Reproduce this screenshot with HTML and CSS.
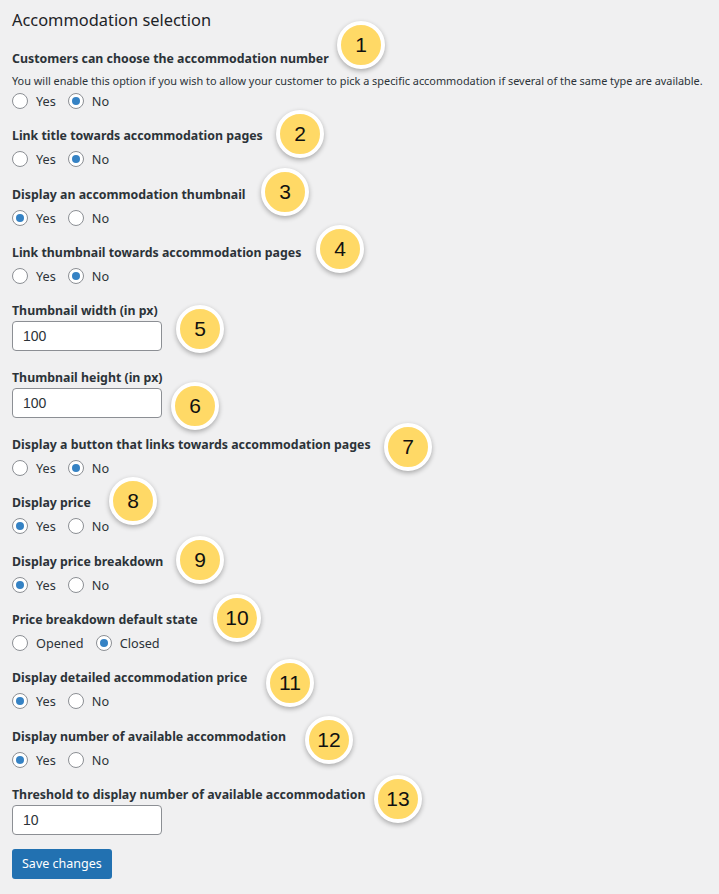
FILE: index.html
```html
<!DOCTYPE html>
<html lang="en">
<head>
    <meta charset="UTF-8">
    <title>Accommodation selection</title>
    <link rel="stylesheet" href="styles.css">
</head>
<body>
    <div class="settings">
        <h2>Accommodation selection</h2>

        <div class="field">
            <label class="field-label">Customers can choose the accommodation number</label>
            <p class="desc">You will enable this option if you wish to allow your customer to pick a specific accommodation if several of the same type are available.</p>
            <div class="choices">
                <label><input type="radio" name="f1"> Yes</label>
                <label><input type="radio" name="f1" checked> No</label>
            </div>
            <span class="badge b1">1</span>
        </div>

        <div class="field">
            <label class="field-label">Link title towards accommodation pages</label>
            <div class="choices">
                <label><input type="radio" name="f2"> Yes</label>
                <label><input type="radio" name="f2" checked> No</label>
            </div>
            <span class="badge b2">2</span>
        </div>

        <div class="field">
            <label class="field-label">Display an accommodation thumbnail</label>
            <div class="choices">
                <label><input type="radio" name="f3" checked> Yes</label>
                <label><input type="radio" name="f3"> No</label>
            </div>
            <span class="badge b3">3</span>
        </div>

        <div class="field">
            <label class="field-label">Link thumbnail towards accommodation pages</label>
            <div class="choices">
                <label><input type="radio" name="f4"> Yes</label>
                <label><input type="radio" name="f4" checked> No</label>
            </div>
            <span class="badge b4">4</span>
        </div>

        <div class="field field-text">
            <label class="field-label" for="thumb_w">Thumbnail width (in px)</label>
            <input type="text" id="thumb_w" value="100">
            <span class="badge b5">5</span>
        </div>

        <div class="field field-text">
            <label class="field-label" for="thumb_h">Thumbnail height (in px)</label>
            <input type="text" id="thumb_h" value="100">
            <span class="badge b6">6</span>
        </div>

        <div class="field">
            <label class="field-label">Display a button that links towards accommodation pages</label>
            <div class="choices">
                <label><input type="radio" name="f7"> Yes</label>
                <label><input type="radio" name="f7" checked> No</label>
            </div>
            <span class="badge b7">7</span>
        </div>

        <div class="field">
            <label class="field-label">Display price</label>
            <div class="choices">
                <label><input type="radio" name="f8" checked> Yes</label>
                <label><input type="radio" name="f8"> No</label>
            </div>
            <span class="badge b8">8</span>
        </div>

        <div class="field">
            <label class="field-label">Display price breakdown</label>
            <div class="choices">
                <label><input type="radio" name="f9" checked> Yes</label>
                <label><input type="radio" name="f9"> No</label>
            </div>
            <span class="badge b9">9</span>
        </div>

        <div class="field">
            <label class="field-label">Price breakdown default state</label>
            <div class="choices">
                <label><input type="radio" name="f10"> Opened</label>
                <label><input type="radio" name="f10" checked> Closed</label>
            </div>
            <span class="badge b10">10</span>
        </div>

        <div class="field">
            <label class="field-label">Display detailed accommodation price</label>
            <div class="choices">
                <label><input type="radio" name="f11" checked> Yes</label>
                <label><input type="radio" name="f11"> No</label>
            </div>
            <span class="badge b11">11</span>
        </div>

        <div class="field">
            <label class="field-label">Display number of available accommodation</label>
            <div class="choices">
                <label><input type="radio" name="f12" checked> Yes</label>
                <label><input type="radio" name="f12"> No</label>
            </div>
            <span class="badge b12">12</span>
        </div>

        <div class="field field-text last">
            <label class="field-label" for="threshold">Threshold to display number of available accommodation</label>
            <input type="text" id="threshold" value="10">
            <span class="badge b13">13</span>
        </div>

        <button type="button" class="btn-save">Save changes</button>
    </div>
</body>
</html>
```

FILE: styles.css
```css
:root {
    --bg: #f0f0f1;
    --text: #1d2327;
    --label: #2c3338;
    --border: #8c8f94;
    --blue: #2271b1;
    --dot: #3582c4;
    --badge: #ffd966;
}

* {
    margin: 0;
    padding: 0;
    box-sizing: border-box;
}

body {
    background-color: var(--bg);
    color: var(--text);
    font-family: "Noto Sans", "Open Sans", sans-serif;
    font-size: 13px;
}

.settings {
    padding: 8px 12px 0;
}

h2 {
    font-size: 16.4px;
    font-weight: 400;
    line-height: 24px;
    color: var(--text);
    margin-bottom: 18px;
}

.field {
    position: relative;
    display: flex;
    flex-direction: column;
    align-items: flex-start;
    margin-bottom: 16.3px;
}

.field-label {
    font-size: 12.35px;
    font-weight: 700;
    line-height: 18px;
    color: var(--label);
    margin-bottom: 4px;
}

.desc {
    font-size: 10.9px;
    line-height: 16px;
    color: var(--label);
    margin-top: 1px;
    margin-bottom: 2px;
}

.choices {
    display: flex;
    gap: 12px;
    height: 20px;
    align-items: center;
}

.choices label {
    display: flex;
    align-items: center;
    gap: 8px;
    color: var(--label);
    font-size: 12.7px;
}

input[type=radio] {
    appearance: none;
    -webkit-appearance: none;
    width: 16px;
    height: 16px;
    border: 1px solid var(--border);
    border-radius: 50%;
    background-color: #fff;
    display: flex;
    align-items: center;
    justify-content: center;
}

input[type=radio]:checked::before {
    content: "";
    width: 8px;
    height: 8px;
    border-radius: 50%;
    background-color: var(--dot);
}

.field-text {
    margin-bottom: 18px;
}

.field-text .field-label {
    margin-bottom: 1px;
}

.field-text input {
    width: 150px;
    height: 30px;
    border: 1px solid var(--border);
    border-radius: 4px;
    background-color: #fff;
    padding: 0 10px;
    font-family: "Liberation Sans", Arial, sans-serif;
    font-size: 14px;
    color: #2c3338;
}

.field-text.last {
    margin-bottom: 14px;
}

.btn-save {
    background-color: var(--blue);
    color: #fff;
    border: none;
    border-radius: 3px;
    height: 30px;
    padding: 0 10px;
    font-family: "Noto Sans", sans-serif;
    font-size: 12.5px;
    cursor: pointer;
}

/* numbered callouts */
.badge {
    position: absolute;
    width: 48px;
    height: 48px;
    border-radius: 50%;
    background-color: var(--badge);
    border: 4px solid #fff;
    box-shadow: 0 2px 5px rgba(0, 0, 0, 0.3);
    font-family: "Liberation Sans", Arial, sans-serif;
    font-size: 21px;
    color: #111;
    display: flex;
    align-items: center;
    justify-content: center;
}

.b1 { left: 325px; top: -29px; }
.b2 { left: 264px; top: -17px; }
.b3 { left: 249px; top: -18px; }
.b4 { left: 304px; top: -19px; }
.b5 { left: 164px; top: 3px; }
.b6 { left: 159px; top: 13px; }
.b7 { left: 372px; top: -13px; }
.b8 { left: 97px; top: -17px; }
.b9 { left: 164px; top: -17px; }
.b10 { left: 201px; top: -17px; }
.b11 { left: 254px; top: -10px; }
.b12 { left: 293px; top: -12px; }
.b13 { left: 362px; top: -11px; }
```
